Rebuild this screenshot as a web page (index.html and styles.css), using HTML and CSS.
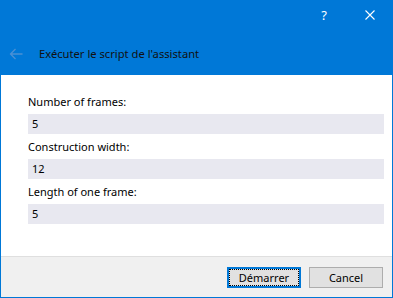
FILE: index.html
```html
<!DOCTYPE html>
<html lang="fr">
<head>
<meta charset="utf-8">
<title>Exécuter le script de l'assistant</title>
<link rel="stylesheet" href="styles.css">
</head>
<body>
<div class="window">
  <div class="titlebar">
    <div class="cap-btn help">?</div>
    <div class="cap-btn close">
      <svg width="10" height="10" viewBox="0 0 10 10"><path d="M0.5 0.5 L9.5 9.5 M9.5 0.5 L0.5 9.5" stroke="#fff" stroke-width="1.1" fill="none"/></svg>
    </div>
  </div>
  <div class="header">
    <svg class="back" width="14" height="12" viewBox="0 0 14 12"><path d="M13.5 6 H1.5 M6.5 1 L1.5 6 L6.5 11" stroke="#4a90d4" stroke-width="1.3" fill="none"/></svg>
    <span class="title">Exécuter le script de l'assistant</span>
  </div>
  <div class="content">
    <div class="field">
      <div class="label">Number of frames:</div>
      <div class="input">5</div>
    </div>
    <div class="field">
      <div class="label">Construction width:</div>
      <div class="input">12</div>
    </div>
    <div class="field">
      <div class="label">Length of one frame:</div>
      <div class="input">5</div>
    </div>
  </div>
  <div class="footer">
    <div class="btn default"><span class="focus">Démarrer</span></div>
    <div class="btn">Cancel</div>
  </div>
</div>
</body>
</html>
```

FILE: styles.css
```css
html, body {
  margin: 0;
  padding: 0;
}
body {
  font-family: "Noto Sans", "Open Sans", sans-serif;
  font-size: 11px;
  color: #000;
}
.window {
  width: 393px;
  height: 298px;
  box-sizing: border-box;
  background: #0078d7;
  padding: 0 1px 1px 1px;
  display: flex;
  flex-direction: column;
}
.titlebar {
  height: 30px;
  display: flex;
  justify-content: flex-end;
  margin-right: -1px;
}
.cap-btn {
  width: 46px;
  height: 30px;
  display: flex;
  align-items: center;
  justify-content: center;
  color: #fff;
}
.help {
  font-size: 13px;
}
.header {
  height: 45px;
  display: flex;
  align-items: center;
}
.back {
  margin-left: 8px;
  margin-right: 16px;
  margin-top: 2px;
}
.title {
  color: #111;
  font-size: 11.2px;
  margin-top: 2px;
}
.content {
  flex: 1;
  background: #fff;
  padding: 19px 8px 0 27px;
  display: flex;
  flex-direction: column;
  gap: 5px;
}
.label {
  line-height: 16px;
  height: 16px;
  margin-bottom: 4px;
}
.input {
  height: 20px;
  line-height: 20px;
  background: #e8e8f0;
  padding-left: 4px;
}
.footer {
  height: 40px;
  background: #f0f0f0;
  border-top: 1px solid #dfdfdf;
  display: flex;
  justify-content: flex-end;
  align-items: center;
  gap: 8px;
  padding-right: 9px;
}
.btn {
  width: 74px;
  height: 21px;
  box-sizing: border-box;
  border: 1px solid #adadad;
  background: #e1e1e1;
  display: flex;
  align-items: center;
  justify-content: center;
  padding: 1px;
}
.btn.default {
  border-color: #0078d7;
  box-shadow: inset 0 0 0 1px #0078d7;
}
.focus {
  display: flex;
  align-items: center;
  justify-content: center;
  width: 100%;
  height: 100%;
  box-sizing: border-box;
  border: 1px dotted #000;
}
```
